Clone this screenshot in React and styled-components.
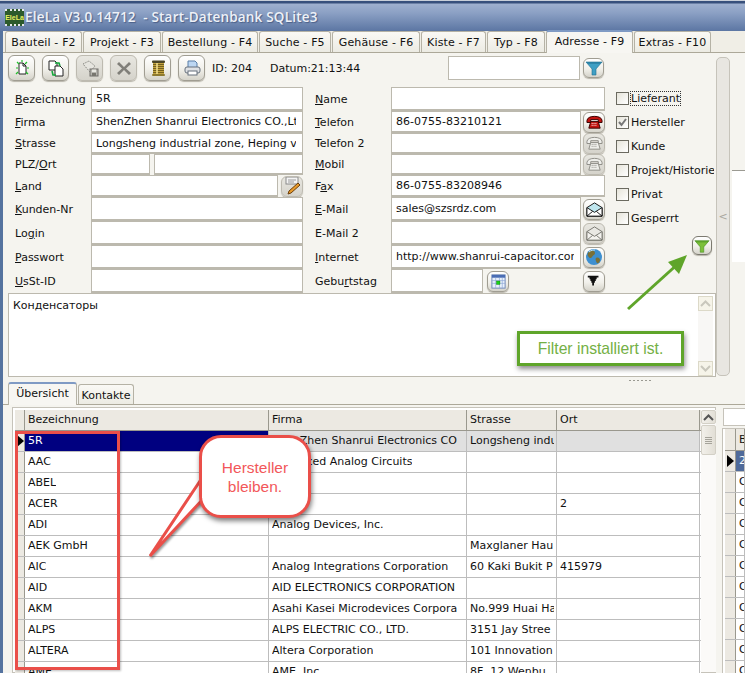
import React from 'react'
import styled, { createGlobalStyle, css } from 'styled-components'

const GlobalStyle = createGlobalStyle`
  html, body {
    margin: 0;
    padding: 0;
    width: 745px;
    height: 673px;
    overflow: hidden;
    background: #f5f4ef;
  }
  * { box-sizing: border-box; }
`

const Window = styled.div`
  position: relative;
  width: 745px;
  height: 673px;
  overflow: hidden;
  font-family: "DejaVu Sans", sans-serif;
  font-size: 11px;
  color: #111;
  display: flex;
  flex-direction: column;
`

const TitleBar = styled.div`
  height: 31px;
  flex: none;
  display: flex;
  align-items: center;
  padding: 2px 0 0 5px;
  border-top: 1px solid #c9cfd9;
  background: linear-gradient(#38507c 0, #38507c 2px, #9fb0cf 3px, #8ba0c4 40%, #5c76a3 100%);
  color: #eef1f7;
  font-family: "Open Sans", sans-serif;
  font-size: 13.5px;
  font-weight: 600;
  letter-spacing: 0.2px;
  white-space: pre;
  text-shadow: 1px 1px 1px #4b6088;
`

const Logo = styled.div`
  width: 19px;
  height: 17px;
  margin-right: 1px;
  background: #2c5a2c;
  border-top: 2px dotted #e8e8e8;
  border-bottom: 2px dotted #e8e8e8;
  color: #e6f060;
  font-family: "Liberation Sans", sans-serif;
  font-size: 7px;
  font-weight: 700;
  letter-spacing: 0;
  line-height: 13px;
  text-align: center;
  text-shadow: none;
  overflow: hidden;
`

const Frame = styled.div`
  flex: 1;
  min-height: 0;
  display: flex;
  flex-direction: column;
  border-left: 3px solid #55739f;
  background: #f5f4ef;
`

const TabStrip = styled.div`
  height: 22px;
  flex: none;
  display: flex;
  align-items: flex-end;
  gap: 1px;
  padding-left: 2px;
  background: #f0eee6;
  border-bottom: 1px solid #aca899;
`

const Tab = styled.div`
  width: ${p => p.$w}px;
  height: ${p => (p.$active ? 23 : 21)}px;
  display: flex;
  align-items: center;
  justify-content: center;
  padding-top: 1px;
  white-space: nowrap;
  letter-spacing: 0.15px;
  border: 1px solid #b5b2a5;
  border-bottom: none;
  border-radius: 3px 3px 0 0;
  background: linear-gradient(#faf9f5, #ecebe3);
  ${p => p.$active && css`
    position: relative;
    top: 1px;
    padding-top: 0;
    padding-bottom: 3px;
    background: #f7f6f2;
    border-top: 2px solid #7f9ac4;
  `}
`

const Upper = styled.div`
  height: 325px;
  flex: none;
  display: flex;
`

const Editor = styled.div`
  width: 713px;
  flex: none;
  display: flex;
  flex-direction: column;
`

const Toolbar = styled.div`
  height: 26px;
  margin: 2px 0 6px 5px;
  display: flex;
  align-items: center;
  gap: 7px;
`

const IconButton = styled.div`
  width: ${p => p.$w || 27}px;
  height: ${p => p.$h || 26}px;
  flex: none;
  display: flex;
  align-items: center;
  justify-content: center;
  border: 1px solid ${p => (p.$off ? '#bdbab0' : '#a09d92')};
  border-radius: 6px;
  background: ${p => (p.$off ? 'linear-gradient(#e8e7e1, #d5d3cb)' : 'linear-gradient(#ffffff, #f1f0ea 55%, #d5d3ca)')};
  box-shadow: 0 1px 1px #b8b5aa;
`

const IdText = styled.span`
  white-space: nowrap;
  margin-left: ${p => p.$left || 0}px;
`

const FilterInput = styled.div`
  width: 132px;
  height: 24px;
  margin-left: 81px;
  background: #fff;
  border: 1px solid #bcb9ae;
`

const FilterButton = styled(IconButton)`
  margin-left: -4px;
`

const FormArea = styled.div`
  display: flex;
  padding-left: 12px;
  height: 206px;
`

const FormGrid = styled.div`
  width: 590px;
  flex: none;
  display: grid;
  grid-template-columns: 76px 212px 88px 214px;
  grid-template-rows: 24px 22px 21px 21px 22px 24px 24px 24px 24px;
`

const Label = styled.div`
  display: flex;
  align-items: center;
  white-space: nowrap;
  ${p => p.$second && css`
    padding-left: 12px;
  `}
`

const FieldRow = styled.div`
  display: flex;
  align-items: center;
  gap: ${p => p.$gap ?? 2}px;
  min-width: 0;
`

const Field = styled.div`
  width: ${p => (p.$w ? `${p.$w}px` : 'auto')};
  flex: ${p => (p.$w ? 'none' : '1')};
  align-self: stretch;
  min-width: 0;
  display: flex;
  align-items: center;
  background: #fff;
  border: 1px solid #bcb9ae;
  border-bottom-width: 2px;
  padding: 0 6px 0 4px;
`

const ClipText = styled.span`
  display: block;
  overflow: hidden;
  white-space: nowrap;
`

const SmallButton = styled(IconButton)`
  width: 22px;
  height: 21px;
`

const FarButton = styled(SmallButton)`
  margin-left: auto;
`

const CheckColumn = styled.div`
  width: 98px;
  margin: -1px 0 0 11px;
  display: flex;
  flex-direction: column;
  overflow: hidden;
`

const CheckRow = styled.div`
  height: 24px;
  flex: none;
  display: flex;
  align-items: center;
  gap: 2px;
  white-space: nowrap;
`

const CheckBox = styled.div`
  width: 13px;
  height: 13px;
  flex: none;
  display: flex;
  align-items: center;
  justify-content: center;
  border: 1px solid #6b6a60;
  background: linear-gradient(135deg, #e6e4da, #fff);
`

const CheckLabel = styled.span`
  ${p => p.$focus && css`
    outline: 1px dotted #333;
    outline-offset: 0;
  `}
`

const GreenFilter = styled(IconButton)`
  width: 20px;
  height: 19px;
  margin: 6px 0 0 76px;
  border-color: #7c7a70;
`

const Memo = styled.div`
  height: 84px;
  margin-left: 5px;
  display: flex;
  background: #fff;
  border: 1px solid #bcb9ae;
  padding-right: 2px;
`

const MemoText = styled.div`
  flex: 1;
  padding: 5px 4px;
`

const MemoScroll = styled.div`
  width: 15px;
  margin: 2px 0 0;
  display: flex;
  flex-direction: column;
  background: #f8f7f5;
`

const MemoArrow = styled.div`
  height: 15px;
  display: flex;
  align-items: center;
  justify-content: center;
  background: #f6f4e9;
  border: 1px solid #dcd9c8;
`

const MemoTrack = styled.div`
  flex: 1;
`

const Splitter = styled.div`
  width: 14px;
  height: 319px;
  margin-top: 4px;
  flex: none;
  display: flex;
  align-items: center;
  justify-content: center;
  background: #e8e6e1;
  border: 1px solid #c6c3ba;
  border-radius: 5px;
  color: #a9a79f;
  font-size: 11px;
`

const SideStrip = styled.div`
  flex: 1;
  padding-top: 117px;
`

const SidePanel = styled.div`
  height: 92px;
  margin-left: 2px;
  background: #fff;
  border-top: 1px solid #9b9a92;
`

const Grip = styled.div`
  height: 5px;
  flex: none;
  display: flex;
  justify-content: flex-end;
  padding: 2px 92px 0 0;
`

const GripDots = styled.div`
  width: 24px;
  height: 1px;
  background: repeating-linear-gradient(90deg, #9a9a92 0 2px, transparent 2px 4px);
`

const SubTabStrip = styled.div`
  height: 22px;
  flex: none;
  display: flex;
  align-items: flex-end;
  gap: 1px;
  padding-left: 5px;
  border-bottom: 1px solid #aca899;
`

const SubTab = styled(Tab)`
  height: ${p => (p.$active ? 23 : 20)}px;
  letter-spacing: 0;
  ${p => p.$active && css`
    padding-bottom: 2px;
  `}
`

const Lower = styled.div`
  flex: 1;
  min-height: 0;
  display: flex;
  padding: 2px 0 0 9px;
  gap: 6px;
  overflow: hidden;
`

const MainGrid = styled.div`
  width: 704px;
  flex: none;
  display: flex;
  padding: 2px 0 0 2px;
  border: 1px solid #c6c3ba;
  background: #fff;
`

const Table = styled.div`
  width: 686px;
  flex: none;
`

const Row = styled.div`
  display: grid;
  grid-template-columns: 10px 244px 198px 90px 143px;
  height: 21px;
  background: ${p => (p.$head ? '#ece9e2' : '#fff')};
  border-bottom: 1px solid ${p => (p.$head ? '#9a988e' : '#bdbdbd')};
`

const Cell = styled.div`
  display: flex;
  align-items: center;
  padding: 0 2px 1px 3px;
  overflow: hidden;
  white-space: nowrap;
  border-right: 1px solid ${p => (p.$head ? '#9a988e' : '#bdbdbd')};
  ${p => p.$tone === 'navy' && css`
    background: #000080;
    color: #fff;
  `}
  ${p => p.$tone === 'grey' && css`
    background: #e0e0e0;
  `}
  ${p => p.$tone === 'slate' && css`
    background: #4f6a9a;
    color: #fff;
  `}
`

const Indicator = styled.div`
  display: flex;
  align-items: center;
  padding-left: 2px;
  background: #ece9e2;
  border-right: 1px solid #9a988e;
`

const Pointer = styled.div`
  width: 0;
  height: 0;
  flex: none;
  border-left: 7px solid #000;
  border-top: 6px solid transparent;
  border-bottom: 6px solid transparent;
`

const ScrollBar = styled.div`
  width: 15px;
  flex: none;
  display: flex;
  flex-direction: column;
  background: #fbfaf8;
`

const ScrollUp = styled.div`
  height: 14px;
  margin-bottom: 1px;
  display: flex;
  align-items: center;
  justify-content: center;
  background: linear-gradient(90deg, #f2f0ea, #e2dfd6);
  border: 1px solid #d3d0c6;
  border-radius: 2px;
`

const ScrollThumb = styled.div`
  height: 30px;
  display: flex;
  flex-direction: column;
  align-items: center;
  justify-content: center;
  gap: 1px;
  background: linear-gradient(90deg, #f2f0ea, #e2dfd6);
  border: 1px solid #d3d0c6;
  border-radius: 2px;
`

const ThumbLine = styled.div`
  width: 7px;
  height: 1px;
  background: #a5a39a;
`

const SideColumn = styled.div`
  flex: 1;
  min-width: 0;
  display: flex;
  flex-direction: column;
  gap: 2px;
`

const SideField = styled.div`
  height: 18px;
  flex: none;
  margin: 1px 0 0 1px;
  background: #fff;
  border: 1px solid #c6c3ba;
  border-right: none;
`

const SideTable = styled.div`
  flex: none;
  background: #fff;
  border: 1px solid #c6c3ba;
  border-right: none;
  padding-left: 2px;
`

const SideRow = styled.div`
  display: grid;
  grid-template-columns: 11px 1fr;
  height: ${p => (p.$head ? 22 : 21)}px;
  border-bottom: 1px solid ${p => (p.$head ? '#9a988e' : '#bdbdbd')};
  background: ${p => (p.$head ? '#ece9e2' : '#fff')};
`

/* annotations lying over the application */
const RedFrame = styled.div`
  position: absolute;
  left: 15px;
  top: 431px;
  width: 105px;
  height: 239px;
  border: 3px solid #ea4f49;
  box-shadow: 1px 1px 2px rgba(0, 0, 0, 0.25);
`

const Callout = styled.div`
  position: absolute;
  left: 199px;
  top: 435px;
  width: 112px;
  height: 83px;
  display: flex;
  align-items: center;
  justify-content: center;
  text-align: center;
  background: #fff;
  border: 3px solid #ea4f49;
  border-radius: 22px;
  box-shadow: 1px 3px 5px rgba(0, 0, 0, 0.5);
  color: #f2575a;
  font-family: "Liberation Sans", sans-serif;
  font-size: 15.5px;
  line-height: 19px;
`

const CalloutTail = styled.svg`
  position: absolute;
  left: 140px;
  top: 470px;
  filter: drop-shadow(1px 2px 1px rgba(0, 0, 0, 0.4));
`

const CalloutMask = styled.div`
  position: absolute;
  left: 202px;
  top: 478px;
  width: 5px;
  height: 20px;
  background: #fff;
`

const GreenBox = styled.div`
  position: absolute;
  left: 517px;
  top: 331px;
  width: 167px;
  height: 35px;
  display: flex;
  align-items: center;
  justify-content: center;
  background: #fff;
  border: 3px solid #5fa52a;
  box-shadow: 1px 3px 5px rgba(0, 0, 0, 0.45);
  color: #74b045;
  font-family: "Liberation Sans", sans-serif;
  font-size: 15.7px;
`

const GreenArrow = styled.svg`
  position: absolute;
  left: 620px;
  top: 248px;
`

const Ico = ({ children, s = 18, v = 18 }) => (
  <svg width={s} height={s} viewBox={`0 0 ${v} ${v}`}>{children}</svg>
)

const NewDocIcon = () => (
  <Ico>
    <path d="M6 4h4l3 3v8H6z" fill="#fff" stroke="#222" />
    <path d="M10 4v3h3" fill="none" stroke="#222" />
    <path d="M3 9h2M14 9h2M4 3l2 2M14 3l-2 2M3 15l2-2M15 15l-2-2M9 1v2" stroke="#1fbf2a" strokeWidth="1.2" />
  </Ico>
)

const CopyDocIcon = () => (
  <Ico>
    <path d="M2 2h6l2 2v7H2z" fill="#fff" stroke="#222" />
    <path d="M8 7h5l3 3v7H8z" fill="#fff" stroke="#222" />
    <path d="M8 4l4 0 1 3" fill="none" stroke="#14a83c" strokeWidth="1.6" />
    <path d="M5 12l1 4h3" fill="none" stroke="#14a83c" strokeWidth="1.6" />
  </Ico>
)

const SaveOffIcon = () => (
  <Ico>
    <path d="M2 5l6-3 6 5-5 6z" fill="#e6e5df" stroke="#8b8a84" strokeDasharray="1.5 1" />
    <rect x="9" y="10" width="8" height="7" fill="#b5b4ae" stroke="#6e6d68" />
    <rect x="11" y="10.5" width="4" height="2.5" fill="#e8e8e2" />
    <rect x="11" y="14" width="4" height="3" fill="#77766f" />
  </Ico>
)

const CrossIcon = () => (
  <Ico>
    <path d="M4 3l5 5 5-5 2 2-5 4.5 5 4.5-2 2-5-5-5 5-2-2 5-4.5-5-4.5z" fill="#807f79" />
  </Ico>
)

const SpoolIcon = () => (
  <Ico>
    <rect x="3" y="1.5" width="13" height="2.5" rx="1" fill="#4a4426" />
    <rect x="4" y="4" width="11" height="11" fill="#c2a23e" />
    <path d="M4 5.5h11M4 7.5h11M4 9.5h11M4 11.5h11M4 13.5h11" stroke="#5f4f18" strokeWidth="0.8" />
    <path d="M8 4v11" stroke="#efdc8c" strokeWidth="2" opacity="0.8" />
    <rect x="3" y="15" width="13" height="2" rx="1" fill="#8d7a30" />
  </Ico>
)

const PrinterIcon = () => (
  <Ico>
    <path d="M5 2h7l2 2v5H5z" fill="#bcd6f2" stroke="#5a7fa8" />
    <rect x="2" y="8" width="15" height="6" rx="2" fill="#dfe1e4" stroke="#66707c" />
    <rect x="5" y="12" width="9" height="4" fill="#fff" stroke="#66707c" />
  </Ico>
)

const FunnelIcon = ({ color = '#3f9fc4', dark = '#1f6f92', s = 18 }) => (
  <Ico s={s}>
    <path d="M1 3h16l-6 7v6l-4 0v-6z" fill={color} stroke={dark} strokeWidth="0.6" />
    <path d="M1 3h16l-2 2H3z" fill={dark} opacity="0.5" />
  </Ico>
)

const PhoneIcon = ({ on }) => (
  <Ico s={17}>
    <path d="M1 7c0-6 16-6 16 0v2h-4V6H5v3H1z" fill={on ? '#c4130f' : '#eeeeea'} stroke={on ? '#300' : '#8c8b85'} />
    <path d="M5 8h8l2 7H3z" fill={on ? '#c4130f' : '#eeeeea'} stroke={on ? '#300' : '#8c8b85'} />
    <path d="M6 10h6M6 12h6" stroke={on ? '#fff' : '#8c8b85'} strokeDasharray="1 1" />
  </Ico>
)

const MailIcon = ({ on }) => (
  <Ico s={17}>
    <path d="M1 7l8-5 8 5v9H1z" fill={on ? '#bfe6ee' : '#e9e8e3'} stroke={on ? '#111' : '#77766f'} />
    <path d="M1 7l8 5 8-5v9H1z" fill={on ? '#fff' : '#f3f2ee'} stroke={on ? '#111' : '#77766f'} />
    <path d="M1 16l6-5M17 16l-6-5" stroke={on ? '#111' : '#77766f'} />
  </Ico>
)

const GlobeIcon = () => (
  <Ico s={18}>
    <circle cx="9" cy="9" r="8" fill="#3d8fd0" />
    <path d="M5 3c3-1 5 0 5 2s-2 2-3 4-3 1-4-1 0-4 2-5zM11 10c2-1 4 0 4 2s-2 4-3 3-2-4-1-5z" fill="#7a7038" />
    <path d="M4 4c2-2 5-2 6-2" stroke="#bfe3f7" fill="none" />
  </Ico>
)

const CalendarIcon = () => (
  <Ico s={17}>
    <rect x="2" y="2" width="14" height="14" fill="#e8f0fb" stroke="#6c86b8" />
    <rect x="2" y="2" width="14" height="3" fill="#4a6db5" />
    <path d="M2 8h14M2 11h14M6 5v11M10 5v11M13 5v11" stroke="#8fa8d8" strokeWidth="0.7" />
    <rect x="7" y="8.5" width="3.5" height="3.5" fill="#15d515" stroke="#0a7a0a" strokeWidth="0.5" />
  </Ico>
)

const DownIcon = () => (
  <Ico s={16}>
    <path d="M2 3h12v2h-2v2h-1v2h-1v2H9v3H7v-3H6V9H5V7H4V5H2z" fill="#111" />
  </Ico>
)

const PencilIcon = () => (
  <Ico s={19} v={19}>
    <rect x="3" y="0" width="12" height="7" fill="#f4f4f4" stroke="#8a8a8a" />
    <path d="M5 3h8M5 5h6" stroke="#9a9a9a" />
    <path d="M15 6l2 2-9 8-3 1 1-3z" fill="#e79a2b" stroke="#6d3f0c" />
  </Ico>
)

const ChevronUp = ({ color = '#555' }) => (
  <svg width="11" height="7" viewBox="0 0 11 7">
    <path d="M1 6l4.5-4.5L10 6" fill="none" stroke={color} strokeWidth="2" />
  </svg>
)

const ChevronDown = ({ color = '#c9c7bc' }) => (
  <svg width="11" height="7" viewBox="0 0 11 7">
    <path d="M1 1l4.5 4.5L10 1" fill="none" stroke={color} strokeWidth="2" />
  </svg>
)

const Tick = () => (
  <svg width="11" height="11" viewBox="0 0 11 11">
    <path d="M2 5l2.5 3L9 2" fill="none" stroke="#777" strokeWidth="2" />
  </svg>
)

const mainTabs = [
  ['Bauteil - F2', 77], ['Projekt - F3', 78], ['Bestellung - F4', 96], ['Suche - F5', 72],
  ['Gehäuse - F6', 88], ['Kiste - F7', 65], ['Typ - F8', 58], ['Adresse - F9', 87], ['Extras - F10', 77],
]

const checks = [
  { label: 'Lieferant', focus: true },
  { label: 'Hersteller', checked: true },
  { label: 'Kunde' },
  { label: 'Projekt/Historie' },
  { label: 'Privat' },
  { label: 'Gesperrt' },
]

const rows = [
  ['5R', 'ShenZhen Shanrui Electronics CO', 'Longsheng indu', ''],
  ['AAC', 'Advanced Analog Circuits', '', ''],
  ['ABEL', '', '', ''],
  ['ACER', '', '', '2'],
  ['ADI', 'Analog Devices, Inc.', '', ''],
  ['AEK GmbH', '', 'Maxglaner Hau', ''],
  ['AIC', 'Analog Integrations Corporation', '60 Kaki Bukit P', '415979'],
  ['AID', 'AID ELECTRONICS CORPORATION', '', ''],
  ['AKM', 'Asahi Kasei Microdevices Corpora', 'No.999 Huai Ha', ''],
  ['ALPS', 'ALPS ELECTRIC CO., LTD.', '3151 Jay Stree', ''],
  ['ALTERA', 'Altera Corporation', '101 Innovation', ''],
  ['AME', 'AME, Inc.', '8F, 12 Wenbu', ''],
]

const sideRows = ['2', 'C', 'C', 'C', 'C', 'C', 'C', 'C', 'C', 'C', 'C']

const App = () => (
  <Window>
    <GlobalStyle />
    <TitleBar>
      <Logo>EleLa</Logo>
      {'EleLa V3.0.14712  - Start-Datenbank SQLite3'}
    </TitleBar>
    <Frame>
      <TabStrip>
        {mainTabs.map(([label, w], i) => (
          <Tab key={label} $w={w} $active={i === 7}>{label}</Tab>
        ))}
      </TabStrip>
      <Upper>
        <Editor>
          <Toolbar>
            <IconButton><NewDocIcon /></IconButton>
            <IconButton><CopyDocIcon /></IconButton>
            <IconButton $off><SaveOffIcon /></IconButton>
            <IconButton $off><CrossIcon /></IconButton>
            <IconButton><SpoolIcon /></IconButton>
            <IconButton><PrinterIcon /></IconButton>
            <IdText>ID: 204</IdText>
            <IdText $left={11}>Datum:21:13:44</IdText>
            <FilterInput />
            <FilterButton $w={21} $h={20}><FunnelIcon /></FilterButton>
          </Toolbar>
          <FormArea>
            <FormGrid>
              <Label><span><u>B</u>ezeichnung</span></Label>
              <FieldRow><Field><ClipText>5R</ClipText></Field></FieldRow>
              <Label $second><span><u>N</u>ame</span></Label>
              <FieldRow><Field /></FieldRow>

              <Label><span><u>F</u>irma</span></Label>
              <FieldRow><Field><ClipText>ShenZhen Shanrui Electronics CO.,Ltd</ClipText></Field></FieldRow>
              <Label $second><span><u>T</u>elefon</span></Label>
              <FieldRow>
                <Field><ClipText>86-0755-83210121</ClipText></Field>
                <SmallButton><PhoneIcon on /></SmallButton>
              </FieldRow>

              <Label><span><u>S</u>trasse</span></Label>
              <FieldRow><Field><ClipText>Longsheng industrial zone, Heping village</ClipText></Field></FieldRow>
              <Label $second>Telefon 2</Label>
              <FieldRow>
                <Field />
                <SmallButton $off><PhoneIcon /></SmallButton>
              </FieldRow>

              <Label><span>PLZ/<u>O</u>rt</span></Label>
              <FieldRow $gap={4}>
                <Field $w={59} />
                <Field />
              </FieldRow>
              <Label $second><span><u>M</u>obil</span></Label>
              <FieldRow>
                <Field />
                <SmallButton $off><PhoneIcon /></SmallButton>
              </FieldRow>

              <Label><span><u>L</u>and</span></Label>
              <FieldRow $gap={3}>
                <Field />
                <SmallButton $off><PencilIcon /></SmallButton>
              </FieldRow>
              <Label $second><span>F<u>a</u>x</span></Label>
              <FieldRow><Field><ClipText>86-0755-83208946</ClipText></Field></FieldRow>

              <Label><span><u>K</u>unden-Nr</span></Label>
              <FieldRow><Field /></FieldRow>
              <Label $second><span><u>E</u>-Mail</span></Label>
              <FieldRow>
                <Field><ClipText>sales@szsrdz.com</ClipText></Field>
                <SmallButton><MailIcon on /></SmallButton>
              </FieldRow>

              <Label><span>Lo<u>g</u>in</span></Label>
              <FieldRow><Field /></FieldRow>
              <Label $second>E-Mail 2</Label>
              <FieldRow>
                <Field />
                <SmallButton $off><MailIcon /></SmallButton>
              </FieldRow>

              <Label><span><u>P</u>asswort</span></Label>
              <FieldRow><Field /></FieldRow>
              <Label $second><span><u>I</u>nternet</span></Label>
              <FieldRow>
                <Field><ClipText>http://www.shanrui-capacitor.com</ClipText></Field>
                <SmallButton><GlobeIcon /></SmallButton>
              </FieldRow>

              <Label><span><u>U</u>sSt-ID</span></Label>
              <FieldRow><Field /></FieldRow>
              <Label $second><span>Gebu<u>r</u>tstag</span></Label>
              <FieldRow $gap={4}>
                <Field $w={92} />
                <SmallButton><CalendarIcon /></SmallButton>
                <FarButton><DownIcon /></FarButton>
              </FieldRow>
            </FormGrid>
            <CheckColumn>
              {checks.map(c => (
                <CheckRow key={c.label}>
                  <CheckBox>{c.checked && <Tick />}</CheckBox>
                  <CheckLabel $focus={c.focus}>{c.label}</CheckLabel>
                </CheckRow>
              ))}
              <GreenFilter><FunnelIcon color="#7cc03a" dark="#3f8a1c" s={16} /></GreenFilter>
            </CheckColumn>
          </FormArea>
          <Memo>
            <MemoText>Конденсаторы</MemoText>
            <MemoScroll>
              <MemoArrow><ChevronUp color="#c9c7bc" /></MemoArrow>
              <MemoTrack />
              <MemoArrow><ChevronDown /></MemoArrow>
            </MemoScroll>
          </Memo>
        </Editor>
        <Splitter>&lt;</Splitter>
        <SideStrip><SidePanel /></SideStrip>
      </Upper>
      <Grip><GripDots /></Grip>
      <SubTabStrip>
        <SubTab $w={69} $active>Übersicht</SubTab>
        <SubTab $w={56}>Kontakte</SubTab>
      </SubTabStrip>
      <Lower>
        <MainGrid>
          <Table>
            <Row $head>
              <Indicator />
              <Cell $head>Bezeichnung</Cell>
              <Cell $head>Firma</Cell>
              <Cell $head>Strasse</Cell>
              <Cell $head>Ort</Cell>
            </Row>
            {rows.map((r, i) => (
              <Row key={r[0]}>
                <Indicator>{i === 0 && <Pointer />}</Indicator>
                <Cell $tone={i === 0 ? 'navy' : undefined}><ClipText>{r[0]}</ClipText></Cell>
                <Cell $tone={i === 0 ? 'grey' : undefined}><ClipText>{r[1]}</ClipText></Cell>
                <Cell $tone={i === 0 ? 'grey' : undefined}><ClipText>{r[2]}</ClipText></Cell>
                <Cell $tone={i === 0 ? 'grey' : undefined}><ClipText>{r[3]}</ClipText></Cell>
              </Row>
            ))}
          </Table>
          <ScrollBar>
            <ScrollUp><ChevronUp /></ScrollUp>
            <ScrollThumb>
              <ThumbLine /><ThumbLine /><ThumbLine /><ThumbLine />
            </ScrollThumb>
          </ScrollBar>
        </MainGrid>
        <SideColumn>
          <SideField />
          <SideTable>
            <SideRow $head>
              <Indicator />
              <Cell $head>B</Cell>
            </SideRow>
            {sideRows.map((v, i) => (
              <SideRow key={i}>
                <Indicator>{i === 0 && <Pointer />}</Indicator>
                <Cell $tone={i === 0 ? 'slate' : undefined}>{v}</Cell>
              </SideRow>
            ))}
          </SideTable>
        </SideColumn>
      </Lower>
    </Frame>

    <RedFrame />
    <CalloutTail width="70" height="95" viewBox="0 0 70 95">
      <path d="M62 8L10 86L64 28" fill="#fff" stroke="#ea4f49" strokeWidth="3" strokeLinejoin="miter" />
    </CalloutTail>
    <Callout>Hersteller<br />bleiben.</Callout>
    <CalloutMask />
    <GreenArrow width="72" height="66" viewBox="0 0 72 66">
      <path d="M8 61L60 14" stroke="#5fa52a" strokeWidth="3" fill="none" />
      <path d="M67 7L48 14L59 26z" fill="#5fa52a" />
    </GreenArrow>
    <GreenBox>Filter installiert ist.</GreenBox>
  </Window>
)

export default App
